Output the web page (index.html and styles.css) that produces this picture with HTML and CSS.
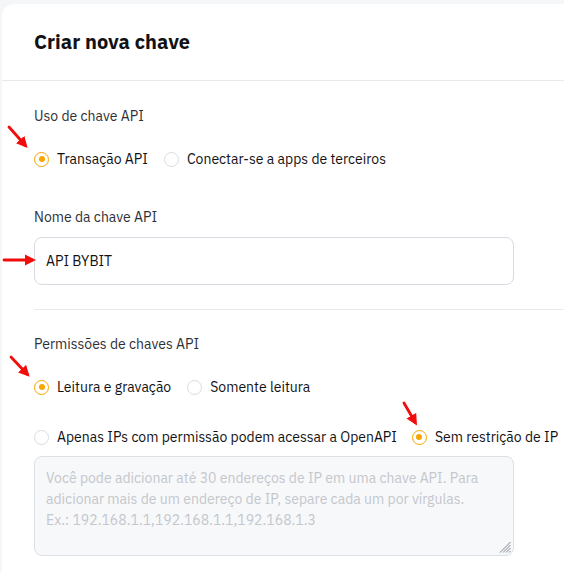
FILE: index.html
```html
<!DOCTYPE html>
<html lang="pt">
<head>
<meta charset="utf-8">
<title>Criar nova chave</title>
<link rel="stylesheet" href="styles.css">
</head>
<body>
<div class="card">
  <div class="card-header">
    <h1 class="title">Criar nova chave</h1>
  </div>
  <div class="card-body">
    <div class="field-label first">Uso de chave API</div>
    <div class="radio-row">
      <label class="radio checked"><span class="dot"></span><span class="radio-text">Transação API</span></label>
      <label class="radio"><span class="dot"></span><span class="radio-text">Conectar-se a apps de terceiros</span></label>
    </div>

    <div class="field-label name-label">Nome da chave API</div>
    <div class="input">API BYBIT</div>

    <div class="divider"></div>

    <div class="field-label perm-label">Permissões de chaves API</div>
    <div class="radio-row">
      <label class="radio checked"><span class="dot"></span><span class="radio-text">Leitura e gravação</span></label>
      <label class="radio"><span class="dot"></span><span class="radio-text">Somente leitura</span></label>
    </div>

    <div class="radio-row ip-row">
      <label class="radio"><span class="dot"></span><span class="radio-text">Apenas IPs com permissão podem acessar a OpenAPI</span></label>
      <label class="radio checked"><span class="dot"></span><span class="radio-text">Sem restrição de IP</span></label>
    </div>

    <div class="textarea-wrap">
      <textarea class="textarea" disabled placeholder="Você pode adicionar até 30 endereços de IP em uma chave API. Para&#10;adicionar mais de um endereço de IP, separe cada um por vírgulas.&#10;Ex.: 192.168.1.1,192.168.1.1,192.168.1.3"></textarea>
      <svg class="resize-handle" width="12" height="12" viewBox="0 0 12 12">
        <path d="M11.5 1 L1 11.5 M11.5 4 L4 11.5 M11.5 7 L7 11.5 M11.5 10 L10 11.5" stroke="#7d828b" stroke-width="1" fill="none"/>
      </svg>
    </div>
  </div>
</div>

<svg class="arrows" width="564" height="572" viewBox="0 0 564 572">
  <defs>
    <marker id="head" markerWidth="4" markerHeight="4" refX="2.6" refY="2" orient="auto" markerUnits="strokeWidth">
      <path d="M0 0 L4 2 L0 4 Z" fill="#f20d0d"/>
    </marker>
  </defs>
  <g stroke="#f20d0d" stroke-width="2.8" fill="none" stroke-linecap="round" marker-end="url(#head)">
    <line x1="9" y1="127" x2="25" y2="145"/>
    <line x1="4" y1="260" x2="32" y2="260"/>
    <line x1="11" y1="357" x2="27" y2="374"/>
    <line x1="404" y1="403" x2="415" y2="422"/>
  </g>
</svg>
</body>
</html>
```

FILE: styles.css
```css
html, body {
  margin: 0;
  padding: 0;
}

body {
  background: #f5f6f8;
  font-family: "IBM Plex Sans", "Inter", "Noto Sans", sans-serif;
  color: #121214;
  width: 564px;
  height: 572px;
  overflow: hidden;
  position: relative;
  display: flex;
  flex-direction: column;
}

.card {
  margin: 4px 0 0 2px;
  flex: 1;
  min-height: 0;
  overflow: hidden;
  background: #ffffff;
  border-top-left-radius: 12px;
}

.card-header {
  height: 76px;
  display: flex;
  align-items: center;
  padding-left: 32px;
  border-bottom: 1px solid #e7e9ed;
}

.title {
  margin: 0;
  font-size: 20px;
  font-weight: 700;
  line-height: 26px;
  color: #121214;
}

.card-body {
  padding-left: 32px;
}

.field-label {
  font-size: 14px;
  line-height: 20px;
  color: #2e3036;
}

.field-label.first {
  padding-top: 25px;
}

.name-label {
  margin-top: 38px;
}

.perm-label {
  margin-top: 24px;
}

.radio-row {
  display: flex;
  align-items: center;
  gap: 16px;
  margin-top: 23px;
  height: 20px;
}

.ip-row {
  margin-top: 30px;
  gap: 15px;
}

.radio {
  display: flex;
  align-items: center;
  gap: 8px;
  font-size: 14px;
  line-height: 20px;
  color: #121214;
  white-space: nowrap;
}

.dot {
  width: 15px;
  height: 15px;
  box-sizing: border-box;
  border-radius: 50%;
  border: 1px solid #d9dce2;
  display: flex;
  align-items: center;
  justify-content: center;
  flex: none;
}

.radio.checked .dot {
  border: 1.5px solid #f7a600;
}

.radio.checked .dot::after {
  content: "";
  width: 6px;
  height: 6px;
  border-radius: 50%;
  background: #f7a600;
}

.input {
  margin-top: 10px;
  width: 480px;
  height: 48px;
  box-sizing: border-box;
  border: 1px solid #d7dbe2;
  border-radius: 8px;
  padding: 0 11px;
  display: flex;
  align-items: center;
  font-size: 14px;
  color: #121214;
}

.divider {
  margin-top: 24px;
  height: 1px;
  background: #e9ebee;
}

.textarea-wrap {
  position: relative;
  margin-top: 9px;
  width: 480px;
  height: 100px;
}

.textarea {
  display: block;
  width: 480px;
  height: 100px;
  box-sizing: border-box;
  margin: 0;
  padding: 11px 11px;
  border: 1px solid #dcdfe4;
  border-radius: 8px;
  background: #f7f8fa;
  font-family: inherit;
  font-size: 14px;
  line-height: 21px;
  resize: none;
  overflow: hidden;
  color: #121214;
}

.textarea::placeholder {
  color: #c4c7cc;
  opacity: 1;
}

.resize-handle {
  position: absolute;
  right: 3px;
  bottom: 3px;
}

.arrows {
  position: absolute;
  top: 0;
  left: 0;
  pointer-events: none;
}
```
